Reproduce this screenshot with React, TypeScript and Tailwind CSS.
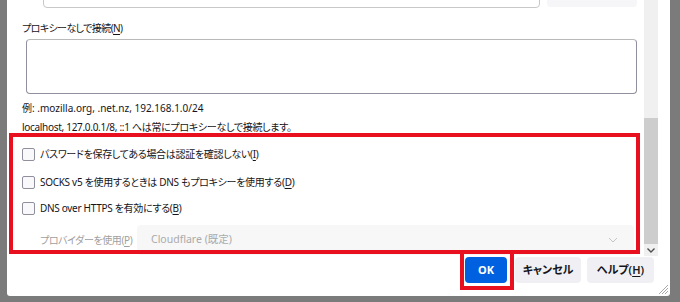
import React from "react";

const font =
  "font-['Segoe_UI','Noto_Sans','Noto_Sans_CJK_JP',sans-serif] [font-feature-settings:'palt']";

function Key({ k }: { k: string }) {
  return (
    <span>
      (<span className="underline underline-offset-2">{k}</span>)
    </span>
  );
}

function Check({ children }: { children: React.ReactNode }) {
  return (
    <div className="flex items-center h-[13px]">
      <span className="w-[13px] h-[13px] rounded-[2px] border border-[#8f8f9d] bg-[#f9f9fb] shrink-0" />
      <span className="ml-[5px] text-[10px] tracking-[-0.3px] leading-[13px] text-[#15141a] whitespace-nowrap">
        {children}
      </span>
    </div>
  );
}

export default function App() {
  return (
    <div className={`w-[680px] h-[302px] bg-[#7b7b7b] flex pl-[7px] overflow-hidden ${font}`}>
      <div className="w-[663px] h-[296px] bg-white rounded-b-[3px] flex flex-col relative">
        {/* scrolling pane */}
        <div className="flex h-[256px]">
          <div className="w-[637px] overflow-hidden pl-[15px] pr-[7px]">
            {/* top row, mostly scrolled away */}
            <div className="flex mt-[-22px] h-[30px]">
              <div className="ml-[21px] w-[497px] h-[30px] rounded-[4px] border border-[#c8c8c8]" />
              <div className="ml-[7px] w-[90px] h-[29px] rounded-[4px] bg-[#f6f6f8]" />
            </div>

            <div className="mt-[13px] text-[10px] tracking-[-0.6px] leading-[14px] text-[#15141a]">
              プロキシーなしで接続<Key k="N" />
            </div>
            <div className="mt-[4px] ml-[4px] h-[55px] rounded-[4px] border border-[#8f8f9d] border-t-[#b9b9b9]" />

            <div className="mt-[7px] text-[10px] leading-[14px] text-[#15141a]">
              例: .mozilla.org, .net.nz, 192.168.1.0/24
            </div>
            <div className="mt-[5px] text-[10px] tracking-[-0.3px] leading-[14px] text-[#15141a]">
              localhost, 127.0.0.1/8, ::1 へは常にプロキシーなしで接続します。
            </div>

            <div className="mt-[14px] flex flex-col gap-[15px]">
              <Check>
                パスワードを保存してある場合は認証を確認しない<Key k="I" />
              </Check>
              <Check>
                SOCKS v5 を使用するときは DNS もプロキシーを使用する<Key k="D" />
              </Check>
              <div className="-mt-[2px]">
                <Check>
                  DNS over HTTPS を有効にする<Key k="B" />
                </Check>
              </div>
            </div>

            <div className="mt-[10px] flex items-center">
              <span className="ml-[18px] text-[10px] tracking-[-0.4px] text-[#a0a0a0] whitespace-nowrap">
                プロバイダーを使用<Key k="P" />
              </span>
              <div className="ml-auto mr-[3px] w-[497px] h-[30px] rounded-[4px] bg-[#f7f7f8] flex items-center pl-[14px] pr-[16px]">
                <span className="flex-1 text-[10.5px] text-[#aaaaaa]">Cloudflare (既定)</span>
                <svg width="10" height="6" viewBox="0 0 10 6" fill="none">
                  <path d="M1 1l4 4 4-4" stroke="#c4c4c4" strokeWidth="1" />
                </svg>
              </div>
            </div>
          </div>

          {/* scrollbar */}
          <div className="w-[14px] bg-[#f0f0f0] flex flex-col">
            <div className="h-[118px]" />
            <div className="h-[126px] bg-[#cdcdcd]" />
            <div className="flex-1 flex items-center justify-center">
              <svg width="8" height="5" viewBox="0 0 8 5" fill="none">
                <path d="M0.5 0.5l3.5 3.5 3.5-3.5" stroke="#505050" strokeWidth="1.4" />
              </svg>
            </div>
          </div>
          <div className="w-[12px]" />
        </div>

        {/* buttons */}
        <div className="flex justify-end pt-[1px] pr-[16px]">
          <button className="w-[42px] h-[26px] rounded-[4px] bg-[#0061e0] text-white text-[11px] font-bold">
            OK
          </button>
          <button className="ml-[8px] w-[66px] h-[26px] rounded-[4px] bg-[#f0f0f4] text-[#15141a] text-[11px] font-semibold">
            キャンセル
          </button>
          <button className="ml-[6px] w-[67px] h-[26px] rounded-[4px] bg-[#f0f0f4] text-[#15141a] text-[11px] font-semibold">
            ヘルプ<Key k="H" />
          </button>
        </div>

        {/* resize grip */}
        <svg className="absolute right-[1px] bottom-[1px]" width="11" height="11" viewBox="0 0 11 11">
          <path d="M10 1L1 10M10 4L4 10M10 7L7 10" stroke="#a8a8a8" strokeWidth="1" />
        </svg>

        {/* annotation boxes */}
        <div className="absolute left-[2px] top-[133px] w-[631px] h-[121px] border-[4px] border-[#e8101e]" />
        <div className="absolute left-[453px] top-[250px] w-[54px] h-[40px] border-[4px] border-[#e8101e]" />
      </div>
    </div>
  );
}
